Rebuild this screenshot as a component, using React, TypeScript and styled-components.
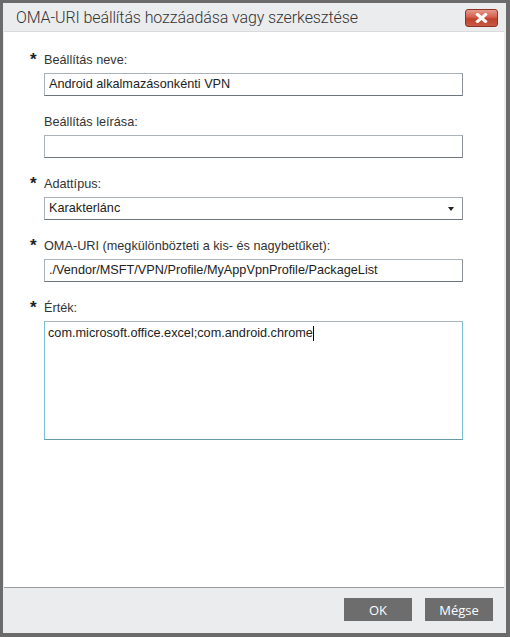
import React from 'react';
import styled, { createGlobalStyle } from 'styled-components';

const GlobalStyle = createGlobalStyle`
  html, body {
    margin: 0;
    padding: 0;
    background: #6b6b6b;
  }
`;

interface FieldDef {
  label: string;
  required: boolean;
  kind: 'input' | 'select' | 'textarea';
  value: string;
}

const fields: FieldDef[] = [
  { label: 'Beállítás neve:', required: true, kind: 'input', value: 'Android alkalmazásonkénti VPN' },
  { label: 'Beállítás leírása:', required: false, kind: 'input', value: '' },
  { label: 'Adattípus:', required: true, kind: 'select', value: 'Karakterlánc' },
  {
    label: 'OMA-URI (megkülönbözteti a kis- és nagybetűket):',
    required: true,
    kind: 'input',
    value: './Vendor/MSFT/VPN/Profile/MyAppVpnProfile/PackageList',
  },
  { label: 'Érték:', required: true, kind: 'textarea', value: 'com.microsoft.office.excel;com.android.chrome' },
];

export default function App() {
  return (
    <>
      <GlobalStyle />
      <Frame>
        <Window>
          <TitleBar>
            <Title>OMA-URI beállítás hozzáadása vagy szerkesztése</Title>
            <CloseButton aria-label="Bezárás">
              <svg width="13" height="10" viewBox="0 0 13 10">
                <path d="M2.5 1.5 L10.5 8.5 M10.5 1.5 L2.5 8.5" stroke="#fff" strokeWidth="3" strokeLinecap="square" />
              </svg>
            </CloseButton>
          </TitleBar>
          <Content>
            {fields.map((f) => (
              <Field key={f.label}>
                <LabelRow>
                  <Star>{f.required ? '*' : ''}</Star>
                  <Label>{f.label}</Label>
                </LabelRow>
                {f.kind === 'input' && <TextBox>{f.value}</TextBox>}
                {f.kind === 'select' && (
                  <SelectBox>
                    <span>{f.value}</span>
                    <Arrow />
                  </SelectBox>
                )}
                {f.kind === 'textarea' && (
                  <TextArea>
                    {f.value}
                    <Caret />
                  </TextArea>
                )}
              </Field>
            ))}
          </Content>
          <Footer>
            <Button>OK</Button>
            <Button>Mégse</Button>
          </Footer>
        </Window>
      </Frame>
    </>
  );
}

const Frame = styled.div`
  width: 510px;
  height: 637px;
  box-sizing: border-box;
  padding: 3px 4px 4px 3px;
  background: #6b6b6b;
`;

const Window = styled.div`
  height: 100%;
  display: flex;
  flex-direction: column;
  box-sizing: border-box;
  background: #ebecee;
  padding: 0 2px 1px 1px;
`;

const TitleBar = styled.div`
  height: 28px;
  display: flex;
  align-items: center;
  justify-content: space-between;
  padding: 0 6px 0 12px;
  border-bottom: 1px solid #d9dadc;
`;

const Title = styled.div`
  font-family: Roboto, 'Liberation Sans', sans-serif;
  font-size: 16px;
  font-weight: 300;
  letter-spacing: -0.1px;
  color: #333;
`;

const CloseButton = styled.div`
  width: 31px;
  height: 16px;
  border: 1px solid #8e3324;
  border-radius: 3px;
  background: linear-gradient(#e69a8c 0%, #d3604c 45%, #c0412b 55%, #c85a45 100%);
  display: flex;
  align-items: center;
  justify-content: center;
  margin-top: 2px;
`;

const Content = styled.div`
  flex: 1;
  background: #fff;
  padding: 20px 40px 0 40px;
  border-bottom: 1px solid #9c9c9c;
  display: flex;
  flex-direction: column;
  gap: 18px;
`;

const Field = styled.div`
  width: 419px;
  display: flex;
  flex-direction: column;
  gap: 5px;
`;

const LabelRow = styled.div`
  display: flex;
  align-items: center;
  height: 16px;
  margin-left: -14px;
`;

const Star = styled.span`
  width: 14px;
  font-family: 'Liberation Sans', sans-serif;
  font-size: 17px;
  font-weight: bold;
  color: #222;
  line-height: 16px;
  margin-top: -1px;
`;

const Label = styled.span`
  font-family: 'Liberation Sans', sans-serif;
  font-size: 12.7px;
  color: #333;
`;

const boxBase = `
  box-sizing: border-box;
  width: 100%;
  border: 1px solid #abb2bb;
  border-right-color: #8c9198;
  border-bottom-color: #6e747b;
  background: #fff;
  font-family: 'Liberation Sans', sans-serif;
  font-size: 12.7px;
  color: #222;
  padding: 0 4px;
`;

const TextBox = styled.div`
  ${boxBase}
  height: 23px;
  line-height: 21px;
`;

const SelectBox = styled.div`
  ${boxBase}
  height: 23px;
  line-height: 21px;
  display: flex;
  align-items: center;
  justify-content: space-between;
  padding-right: 8px;
`;

const Arrow = styled.span`
  width: 0;
  height: 0;
  border-left: 3.5px solid transparent;
  border-right: 3.5px solid transparent;
  border-top: 4px solid #222;
`;

const TextArea = styled.div`
  ${boxBase}
  height: 119px;
  padding: 4px 3px;
  line-height: 15px;
  border-color: #79bfd3;
  border-top-color: #a9b4bb;
  border-bottom-color: #6a9aa8;
`;

const Caret = styled.span`
  display: inline-block;
  width: 1px;
  height: 15px;
  background: #000;
  vertical-align: top;
`;

const Footer = styled.div`
  height: 44px;
  display: flex;
  justify-content: flex-end;
  align-items: flex-start;
  gap: 13px;
  padding: 10px 11px 0 0;
  box-sizing: border-box;
`;

const Button = styled.div`
  width: 68px;
  height: 23px;
  background: #6d6d6d;
  color: #fff;
  font-family: 'Open Sans', 'Liberation Sans', sans-serif;
  font-size: 13px;
  display: flex;
  align-items: center;
  justify-content: center;
`;
